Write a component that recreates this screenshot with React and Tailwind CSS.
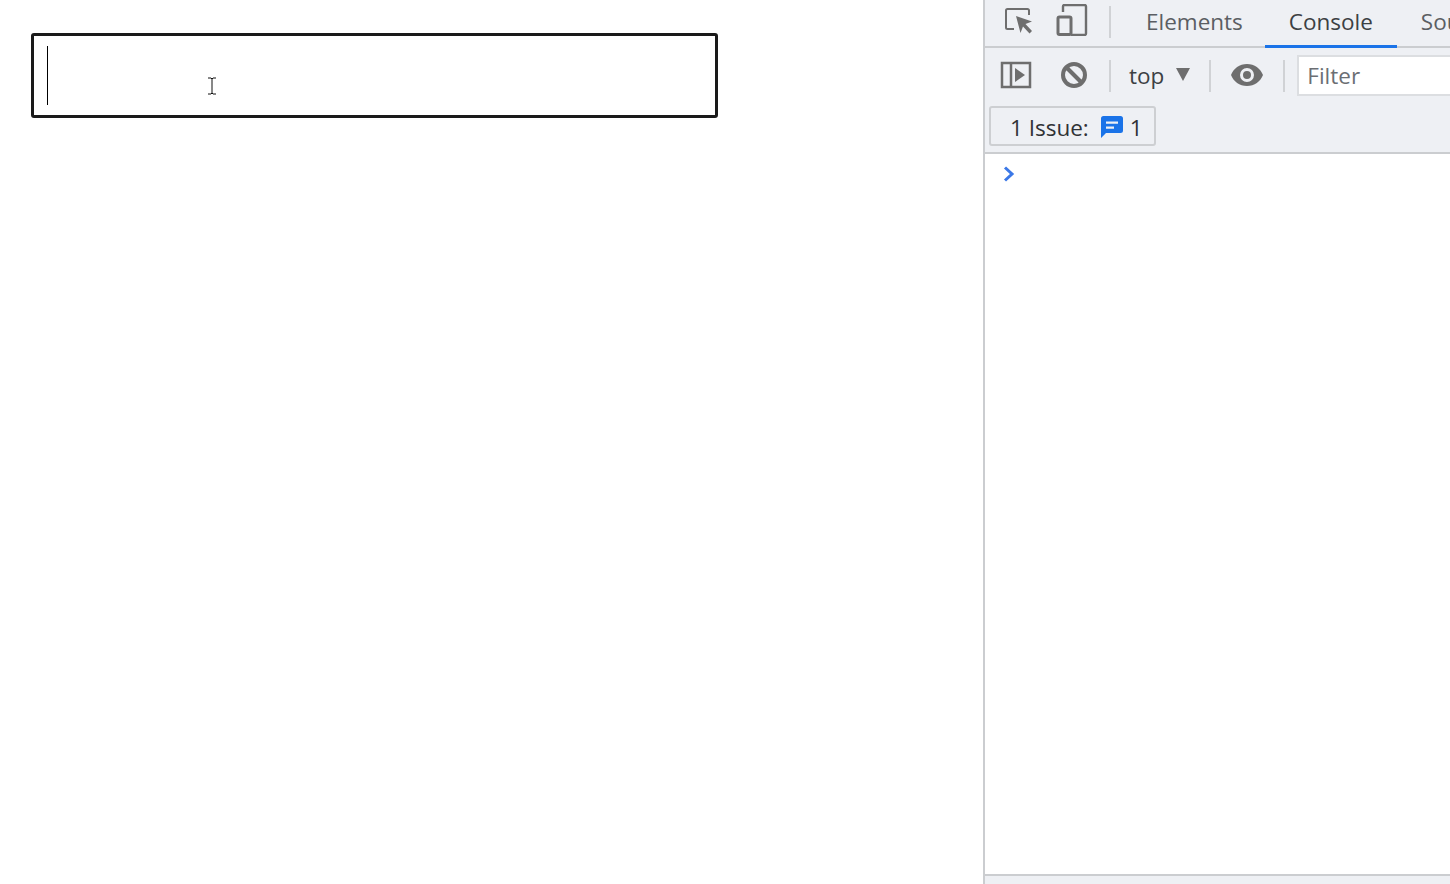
const Sep = ({ ml, mr }) => <span className={`h-[32px] w-[2px] shrink-0 bg-[#d0d2d5] ${ml} ${mr}`}></span>;

function InspectIcon() {
  return (
    <svg width="30" height="30" viewBox="0 0 30 30" fill="none" className="mb-[3px] ml-[19px] shrink-0">
      <path d="M10 24H3.500a1.500 1.500 0 0 1-1.500-1.500V5.500A1.500 1.500 0 0 1 3.500 4h20A1.500 1.500 0 0 1 25 5.500V10" stroke="#6e6e6e" strokeWidth="2" />
      <path d="M12 11l16 5.500-6.500 2.500 6.500 7-2.500 2.500-6.500-7-2.500 6.500z" fill="#6e6e6e" />
    </svg>
  );
}

function DeviceIcon() {
  return (
    <svg width="32" height="32" viewBox="0 0 32 32" fill="none" className="mb-[4px] ml-[22px] shrink-0">
      <path d="M7 11V5.500A1.500 1.500 0 0 1 8.500 4h20A1.500 1.500 0 0 1 30 5.500v27a1.500 1.500 0 0 1-1.500 1.500H15" stroke="#6e6e6e" strokeWidth="2.400" transform="translate(0 -3)" />
      <rect x="2" y="13" width="13" height="17.500" rx="1.500" stroke="#6e6e6e" strokeWidth="3" fill="#eef0f4" />
    </svg>
  );
}

export default function App() {
  return (
    <div className="flex h-[884px] w-[1450px] overflow-hidden bg-white font-['Open_Sans','Noto_Sans',sans-serif]">
      <div className="relative w-[983px] shrink-0 pl-[31px] pt-[33px]">
        <div className="flex h-[85px] w-[687px] items-start rounded-[3px] border-[3px] border-[#1a1a1a] pl-[13px] pt-[10px]">
          <span className="block h-[59px] w-px bg-black"></span>
        </div>
        <svg width="10" height="18" viewBox="0 0 10 18" className="absolute left-[207px] top-[77px]" fill="none">
          <path d="M1 1h3l1 1 1-1h3M5 2v14M1 17h3l1-1 1 1h3" stroke="#111" strokeWidth="1" />
        </svg>
      </div>

      <div className="flex min-w-0 flex-1 flex-col border-l-2 border-[#cbcdd0] text-[#5b5e63]">
        <div className="flex h-[48px] shrink-0 items-center border-b-2 border-[#cbcdd0] bg-[#eef0f4] pb-[3px]">
          <InspectIcon />
          <DeviceIcon />
          <Sep ml="ml-[21px]" />
          <span className="ml-[35px] text-[22.500px] leading-[30px]">Elements</span>
          <div className="relative ml-[22px] flex h-[46px] w-[132px] shrink-0 items-center justify-center">
            <span className="text-[22.500px] leading-[30px] text-[#3c4043]">Console</span>
            <span className="absolute bottom-[-3px] left-0 h-[3px] w-full bg-[#1a73e8]"></span>
          </div>
          <span className="ml-[24px] whitespace-nowrap text-[22.500px] leading-[30px]">Sou</span>
        </div>

        <div className="flex h-[56px] shrink-0 items-center bg-[#eef0f4]">
          <svg width="32" height="28" viewBox="0 0 32 28" fill="none" className="mb-[2px] ml-[15px] shrink-0">
            <rect x="2" y="2" width="28" height="24" stroke="#6e6e6e" strokeWidth="2.500" />
            <path d="M11 2v24" stroke="#6e6e6e" strokeWidth="2.500" />
            <path d="M15 7l10 7-10 7z" fill="#6e6e6e" />
          </svg>
          <svg width="28" height="28" viewBox="0 0 28 28" fill="none" className="mb-[2px] ml-[28px] shrink-0">
            <circle cx="14" cy="14" r="11" stroke="#6e6e6e" strokeWidth="4" />
            <path d="M6 6l16 16" stroke="#6e6e6e" strokeWidth="4" />
          </svg>
          <Sep ml="ml-[21px]" />
          <span className="ml-[18px] text-[22.500px] leading-[30px] text-[#3c4043]">top</span>
          <svg width="16" height="13" viewBox="0 0 16 13" className="mb-[3px] ml-[11px] shrink-0">
            <path d="M1 0h14l-7 13z" fill="#6e6e6e" />
          </svg>
          <Sep ml="ml-[18px]" />
          <svg width="34" height="24" viewBox="0 0 34 24" className="mb-[3px] ml-[19px] shrink-0">
            <path fillRule="evenodd" d="M17 1C9.500 1 3.500 5.500 1 12c2.500 6.500 8.500 11 16 11s13.500-4.500 16-11C30.500 5.500 24.500 1 17 1zm0 18a7 7 0 1 1 0-14 7 7 0 0 1 0 14zm0-11a4 4 0 1 0 0 8 4 4 0 0 0 0-8z" fill="#6e6e6e" />
          </svg>
          <Sep ml="ml-[19px]" />
          <div className="mb-[2px] ml-[12px] flex h-[41px] flex-1 items-center border-2 border-r-0 border-[#dcdee1] bg-white pl-[8px]">
            <span className="translate-y-px text-[22.500px] leading-[30px] text-[#6b6e73]">Filter</span>
          </div>
        </div>

        <div className="flex h-[50px] shrink-0 items-start border-b-2 border-[#cbcdd0] bg-[#eef0f4] pl-[4px] pt-[2px]">
          <div className="flex h-[40px] w-[167px] items-center rounded-[3px] border-2 border-[#cdcfd2] pl-[19px] text-[22.500px] leading-[30px] text-[#303236]">
            <span className="translate-y-[2px]">1 Issue:</span>
            <svg width="24" height="24" viewBox="0 0 24 24" className="ml-[11px] shrink-0 translate-y-px">
              <path fillRule="evenodd" d="M3.500 1h17A2.500 2.500 0 0 1 23 3.500v12a2.500 2.500 0 0 1-2.500 2.500H6l-5 5V3.500A2.500 2.500 0 0 1 3.500 1zM6 6.500v2.200h12V6.500zm0 5v2.200h8v-2.200z" fill="#1a73e8" />
            </svg>
            <span className="ml-[6px] translate-y-[2px]">1</span>
          </div>
        </div>

        <div className="min-h-0 flex-1 bg-white pl-[18px] pt-[12px]">
          <svg width="12" height="16" viewBox="0 0 12 16" fill="none">
            <path d="M2 1.500L9 8l-7 6.500" stroke="#3b78e7" strokeWidth="3" />
          </svg>
        </div>

        <div className="h-[10px] shrink-0 border-t-2 border-[#cbcdd0] bg-[#eef0f4]"></div>
      </div>
    </div>
  );
}
